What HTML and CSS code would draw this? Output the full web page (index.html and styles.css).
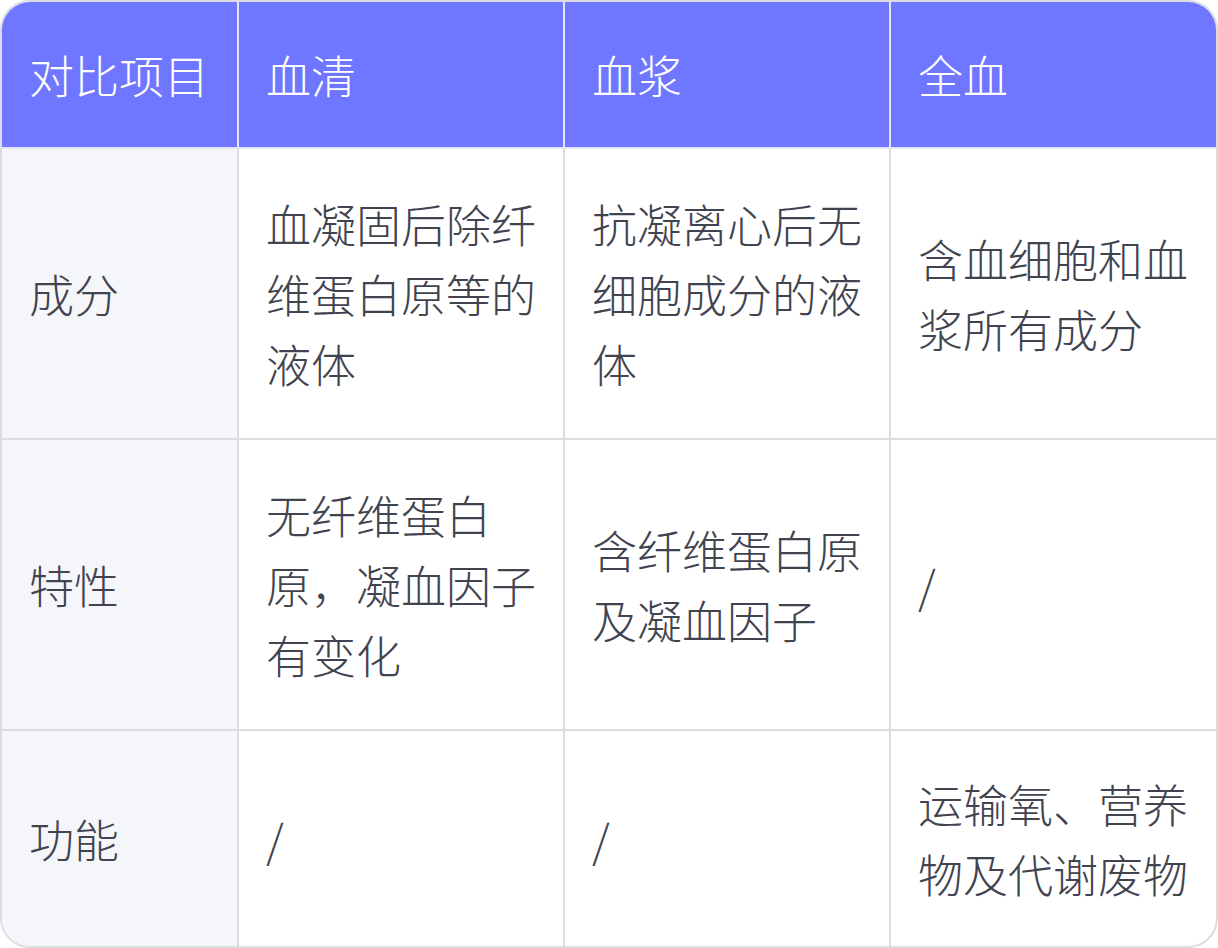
FILE: index.html
```html
<!DOCTYPE html>
<html lang="zh-CN">
<head>
<meta charset="utf-8">
<link rel="stylesheet" href="styles.css">
</head>
<body>
<div class="wrap">
<table class="cmp">
<colgroup><col class="c1"><col class="c2"><col class="c2"><col class="c2"></colgroup>
<thead>
<tr class="hr"><th>对比项目</th><th>血清</th><th>血浆</th><th>全血</th></tr>
</thead>
<tbody>
<tr class="r1"><td class="lab">成分</td><td>血凝固后除纤维蛋白原等的液体</td><td>抗凝离心后无细胞成分的液体</td><td>含血细胞和血浆所有成分</td></tr>
<tr class="r2"><td class="lab">特性</td><td>无纤维蛋白原，凝血因子有变化</td><td>含纤维蛋白原及凝血因子</td><td>/</td></tr>
<tr class="r3"><td class="lab">功能</td><td>/</td><td>/</td><td>运输氧、营养物及代谢废物</td></tr>
</tbody>
</table>
</div>
</body>
</html>
```
FILE: styles.css
```css
html, body { margin: 0; padding: 0; background: #ffffff; }
.wrap {
  width: 1218px;
  height: 948px;
  box-sizing: border-box;
  border: 2px solid #dcdde1;
  border-radius: 30px;
  overflow: hidden;
  background: #ffffff;
}
.cmp {
  width: 100%;
  height: 100%;
  border-collapse: collapse;
  table-layout: fixed;
  font-family: "Noto Sans CJK SC", "Noto Sans", sans-serif;
  font-size: 45px;
  line-height: 70px;
  color: #41434f;
}
.c1 { width: 236px; }
.hr { height: 146px; }
.r1, .r2 { height: 290px; }
.r3 { height: 215px; }
.cmp th, .cmp td {
  border: 2px solid #dcdde1;
  padding: 0 23px 0 27px;
  text-align: left;
  vertical-align: middle;
  font-weight: 300;
}
.cmp tr > :first-child { border-left: none; }
.cmp tr > :last-child { border-right: none; }
.cmp thead th { border-top: none; background: #6f76ff; color: #ffffff; border-bottom-color: #e4e6ff; border-left-color: #e4e6ff; border-right-color: #e4e6ff; }
.cmp tbody tr:last-child td { border-bottom: none; }
.cmp td.lab { background: #f5f6fa; }
```
